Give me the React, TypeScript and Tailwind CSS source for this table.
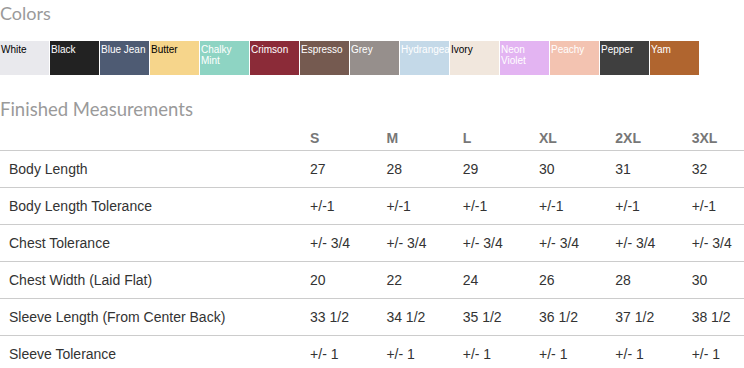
const swatches = [
  { name: 'White', bg: 'bg-[#e9e9ed]', text: 'text-black' },
  { name: 'Black', bg: 'bg-[#222222]', text: 'text-white' },
  { name: 'Blue Jean', bg: 'bg-[#4e5b73]', text: 'text-white' },
  { name: 'Butter', bg: 'bg-[#f6d58b]', text: 'text-black' },
  { name: 'Chalky Mint', bg: 'bg-[#8ed4c3]', text: 'text-white' },
  { name: 'Crimson', bg: 'bg-[#8b2b38]', text: 'text-white' },
  { name: 'Espresso', bg: 'bg-[#755a50]', text: 'text-white' },
  { name: 'Grey', bg: 'bg-[#968f8c]', text: 'text-white' },
  { name: 'Hydrangea', bg: 'bg-[#c4d9e8]', text: 'text-white' },
  { name: 'Ivory', bg: 'bg-[#f1e7dd]', text: 'text-black' },
  { name: 'Neon Violet', bg: 'bg-[#e3b4f2]', text: 'text-white' },
  { name: 'Peachy', bg: 'bg-[#f3c3b1]', text: 'text-white' },
  { name: 'Pepper', bg: 'bg-[#3f3f3f]', text: 'text-white' },
  { name: 'Yam', bg: 'bg-[#b0652f]', text: 'text-white' }
]

const sizes = ['S', 'M', 'L', 'XL', '2XL', '3XL']

const rows = [
  { label: 'Body Length', values: ['27', '28', '29', '30', '31', '32'] },
  { label: 'Body Length Tolerance', values: ['+/-1', '+/-1', '+/-1', '+/-1', '+/-1', '+/-1'] },
  { label: 'Chest Tolerance', values: ['+/- 3/4', '+/- 3/4', '+/- 3/4', '+/- 3/4', '+/- 3/4', '+/- 3/4'] },
  { label: 'Chest Width (Laid Flat)', values: ['20', '22', '24', '26', '28', '30'] },
  { label: 'Sleeve Length (From Center Back)', values: ['33 1/2', '34 1/2', '35 1/2', '36 1/2', '37 1/2', '38 1/2'] },
  { label: 'Sleeve Tolerance', values: ['+/- 1', '+/- 1', '+/- 1', '+/- 1', '+/- 1', '+/- 1'] }
]

const App = () => {
  return (
    <div className="w-[744px] h-[368px] overflow-hidden bg-white">
      <h2 className="font-['Lato',sans-serif] text-[18px] leading-[26px] text-[#9a9a9a]">
        Colors
      </h2>
      <div className="mt-[15px] flex gap-px">
        {swatches.map((s) => (
          <div
            key={s.name}
            className={`w-[49px] h-[34px] shrink-0 overflow-hidden px-[1px] pt-[3px] font-['Liberation_Sans',Arial,sans-serif] text-[10px] leading-[11px] ${s.bg} ${s.text}`}
          >
            {s.name}
          </div>
        ))}
      </div>
      <h2 className="mt-[21px] font-['Lato',sans-serif] text-[18.5px] leading-[26px] text-[#9a9a9a]">
        Finished Measurements
      </h2>
      <table className="table-fixed border-collapse w-[759px] font-['Liberation_Sans',Arial,sans-serif]">
        <colgroup>
          <col className="w-[301px]" />
          {sizes.map((s) => (
            <col key={s} className="w-[76.3px]" />
          ))}
        </colgroup>
        <thead>
          <tr className="border-b border-[#cccccc]">
            <th />
            {sizes.map((s) => (
              <th
                key={s}
                className="h-[28px] align-bottom pb-[4px] pl-[9px] text-left text-[14px] leading-[16px] font-bold text-[#777777]"
              >
                {s}
              </th>
            ))}
          </tr>
        </thead>
        <tbody>
          {rows.map((r) => (
            <tr key={r.label} className="border-b border-[#cccccc]">
              <td className="h-[37px] pl-[9px] text-[14px] leading-[16px] text-[#333333]">
                {r.label}
              </td>
              {r.values.map((v, i) => (
                <td
                  key={i}
                  className="h-[37px] pl-[9px] text-[14px] leading-[16px] text-[#333333]"
                >
                  {v}
                </td>
              ))}
            </tr>
          ))}
        </tbody>
      </table>
    </div>
  )
}

export default App
